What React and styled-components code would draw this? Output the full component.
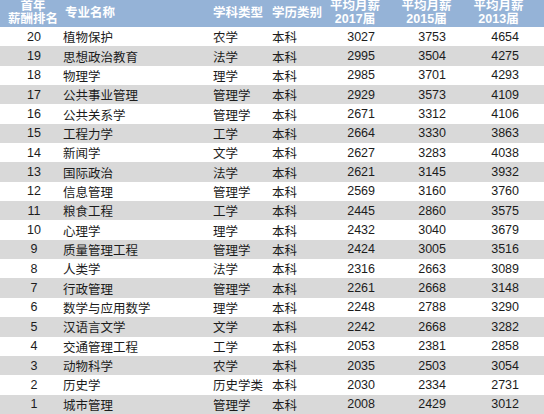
import styled, { createGlobalStyle } from 'styled-components';

const GlobalStyle = createGlobalStyle`
	html, body {
		margin: 0;
		padding: 0;
		background: #ffffff;
	}
	body {
		font-family: "Liberation Sans", "Noto Sans CJK SC", sans-serif;
		color: #1c1c1c;
	}
`;

const COLUMNS = '62px 149px 60px 51px 58px 71px 73px 1fr';

const rows = [
	[20, '植物保护', '农学', '本科', 3027, 3753, 4654],
	[19, '思想政治教育', '法学', '本科', 2995, 3504, 4275],
	[18, '物理学', '理学', '本科', 2985, 3701, 4293],
	[17, '公共事业管理', '管理学', '本科', 2929, 3573, 4109],
	[16, '公共关系学', '管理学', '本科', 2671, 3312, 4106],
	[15, '工程力学', '工学', '本科', 2664, 3330, 3863],
	[14, '新闻学', '文学', '本科', 2627, 3283, 4038],
	[13, '国际政治', '法学', '本科', 2621, 3145, 3932],
	[12, '信息管理', '管理学', '本科', 2569, 3160, 3760],
	[11, '粮食工程', '工学', '本科', 2445, 2860, 3575],
	[10, '心理学', '理学', '本科', 2432, 3040, 3679],
	[9, '质量管理工程', '管理学', '本科', 2424, 3005, 3516],
	[8, '人类学', '法学', '本科', 2316, 2663, 3089],
	[7, '行政管理', '管理学', '本科', 2261, 2668, 3148],
	[6, '数学与应用数学', '理学', '本科', 2248, 2788, 3290],
	[5, '汉语言文学', '文学', '本科', 2242, 2668, 3282],
	[4, '交通管理工程', '工学', '本科', 2053, 2381, 2858],
	[3, '动物科学', '农学', '本科', 2035, 2503, 3054],
	[2, '历史学', '历史学类', '本科', 2030, 2334, 2731],
	[1, '城市管理', '管理学', '本科', 2008, 2429, 3012],
];

const Table = styled.div`
	width: 544px;
	height: 414px;
	overflow: hidden;
	display: flex;
	flex-direction: column;
`;

const HeaderRow = styled.div`
	display: grid;
	grid-template-columns: ${COLUMNS};
	height: 27px;
	background: #95b3d7;
	color: #ffffff;
	font-weight: bold;
	font-size: 12.5px;
	line-height: 13px;
`;

const HeadCell = styled.div`
	display: flex;
	flex-direction: column;
	justify-content: ${({ $two }) => ($two ? 'flex-start' : 'center')};
	align-items: ${({ $align }) => $align || 'flex-start'};
	padding: ${({ $two }) => ($two ? '0' : '0 0 1px')};
	padding-left: ${({ $pl }) => $pl || 0}px;
	padding-right: ${({ $pr }) => $pr || 0}px;
	white-space: nowrap;
`;

const DataRow = styled.div`
	display: grid;
	grid-template-columns: ${COLUMNS};
	height: 19.35px;
	align-items: center;
	background: ${({ $shaded }) => ($shaded ? '#d9d9d9' : '#ffffff')};
	font-size: 12.5px;
`;

const Cell = styled.div`
	text-align: ${({ $align }) => $align || 'left'};
	padding-left: ${({ $pl }) => $pl || 0}px;
	padding-right: ${({ $pr }) => $pr || 0}px;
	white-space: nowrap;
`;

export default function App() {
	return (
		<>
			<GlobalStyle />
			<Table>
				<HeaderRow>
					<HeadCell $two $align="center" $pl={4}>
						<span>首年</span>
						<span>薪酬排名</span>
					</HeadCell>
					<HeadCell $pl={3}>专业名称</HeadCell>
					<HeadCell $pl={2}>学科类型</HeadCell>
					<HeadCell $pl={1}>学历类别</HeadCell>
					<HeadCell $two $align="center" $pl={8}>
						<span>平均月薪</span>
						<span>2017届</span>
					</HeadCell>
					<HeadCell $two $align="center" $pl={22}>
						<span>平均月薪</span>
						<span>2015届</span>
					</HeadCell>
					<HeadCell $two $align="center" $pl={22}>
						<span>平均月薪</span>
						<span>2013届</span>
					</HeadCell>
					<HeadCell />
				</HeaderRow>
				{rows.map((r, i) => (
					<DataRow key={r[0]} $shaded={i % 2 === 1}>
						<Cell $align="center" $pl={6}>{r[0]}</Cell>
						<Cell $pl={1}>{r[1]}</Cell>
						<Cell $pl={2}>{r[2]}</Cell>
						<Cell $pl={1}>{r[3]}</Cell>
						<Cell $align="right" $pr={5}>{r[4]}</Cell>
						<Cell $align="right" $pr={5}>{r[5]}</Cell>
						<Cell $align="right" $pr={5}>{r[6]}</Cell>
						<Cell />
					</DataRow>
				))}
			</Table>
		</>
	);
}
